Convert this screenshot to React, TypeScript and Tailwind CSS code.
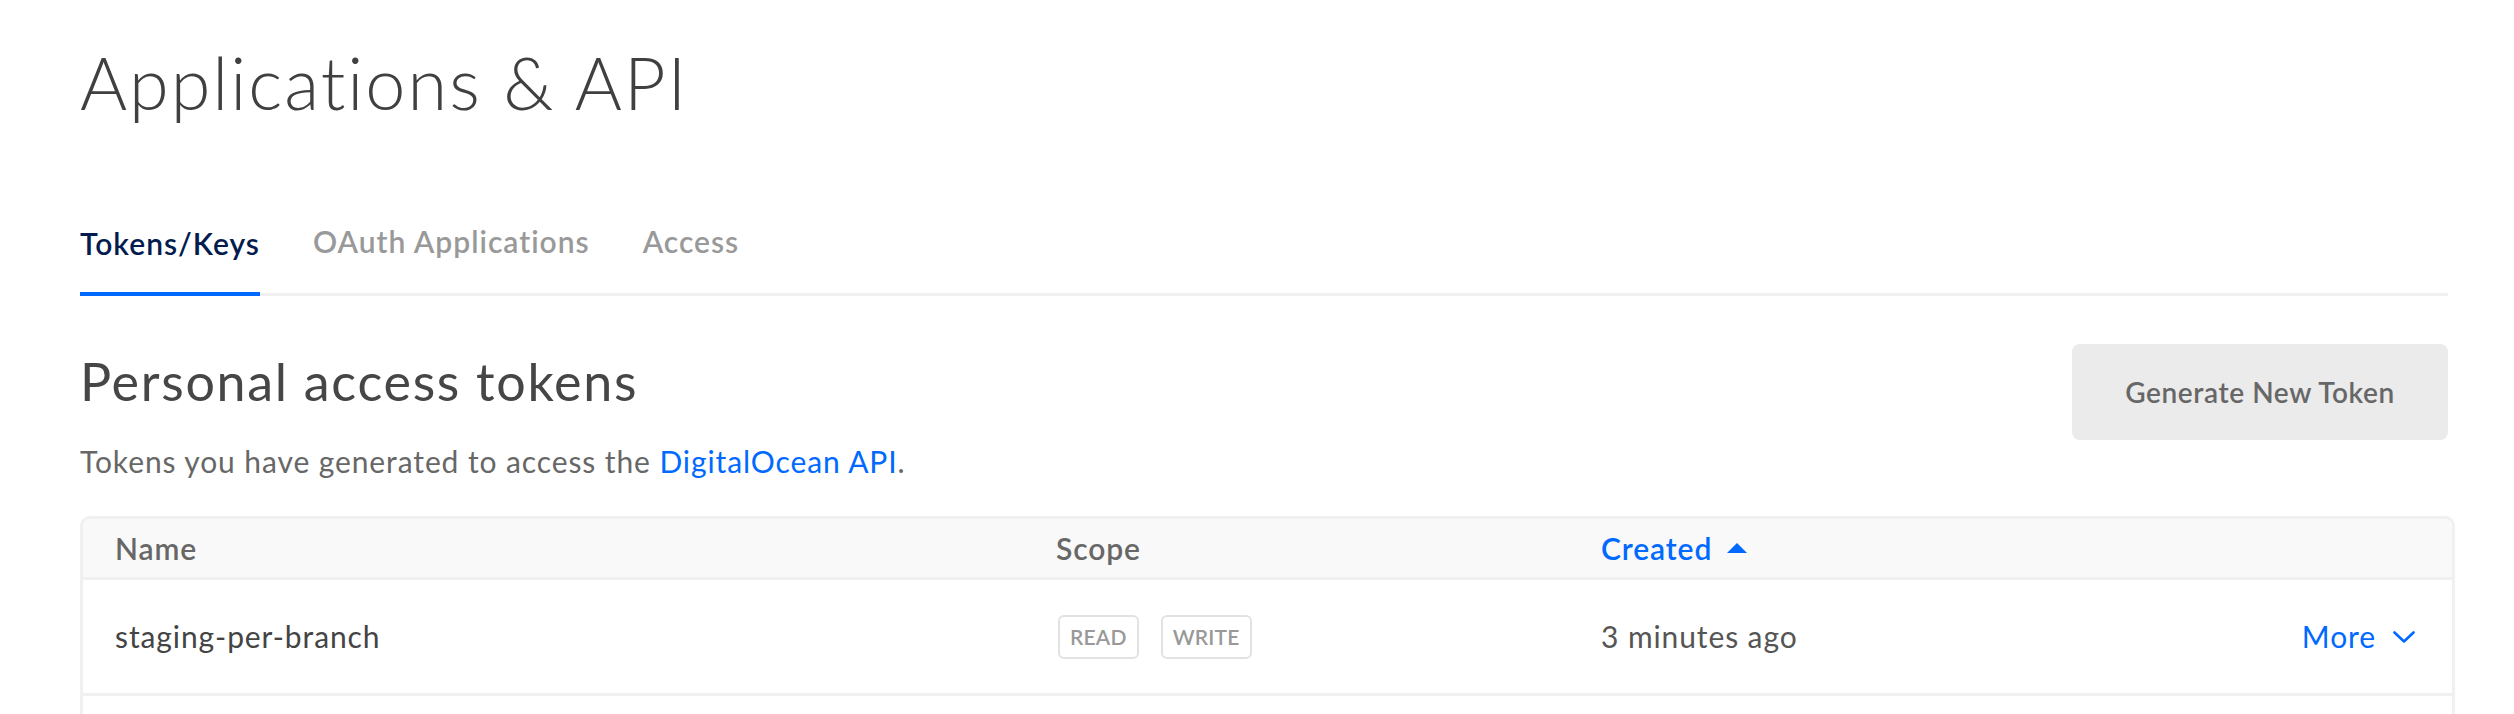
import React from 'react';

const tabs = ['Tokens/Keys', 'OAuth Applications', 'Access'];

const Badge: React.FC<{ label: string }> = ({ label }) => (
  <span className="inline-flex h-[44px] items-center rounded-[6px] border-2 border-[#e2e2e2] px-[10px] text-[21px] font-semibold tracking-[0.2px] text-[#999]">
    {label}
  </span>
);

export default function App() {
  return (
    <div className="min-h-[714px] bg-white font-['Lato',sans-serif] text-[#444]">
      <div className="pl-[80px] pr-[66px] pt-[46px]">
        <h1 className="text-[72px] leading-[72px] font-light tracking-[2px] text-[#404040]">Applications &amp; API</h1>

        {/* tabs */}
        <div className="mt-[109px] flex items-end gap-[53px] border-b-[3px] border-[#f0f0f0]">
          {tabs.map((t, i) => (
            <div
              key={t}
              className={
                i === 0
                  ? '-mb-[3px] border-b-4 border-[#0069ff] pb-[35px] text-[30px] leading-[28px] font-semibold tracking-[1px] text-[#031b4e]'
                  : 'pb-[38px] text-[30px] leading-[28px] font-semibold tracking-[1px] text-[#999]'
              }
            >
              {t}
            </div>
          ))}
        </div>

        <div className="mt-[48px] flex items-start justify-between">
          <div>
            <h2 className="mt-[12px] text-[52px] leading-[50px] font-normal tracking-[1.7px] text-[#464646]">Personal access tokens</h2>
            <p className="mt-[41px] text-[30px] leading-[28px] tracking-[0.9px] text-[#676767]">
              Tokens you have generated to access the <span className="text-[#0069ff]">DigitalOcean API</span>.
            </p>
          </div>
          <button className="flex h-[96px] w-[376px] items-center justify-center rounded-[8px] bg-[#ebebeb] text-[28px] font-semibold tracking-[0.6px] text-[#676767]">
            Generate New Token
          </button>
        </div>

        {/* table */}
        <div className="mt-[41px] -mr-[7px] overflow-hidden rounded-t-[10px] border-x-[3px] border-t-[3px] border-[#f0f0f0]">
          <div className="grid h-[61px] grid-cols-[941px_545px_1fr] items-center border-b-[3px] border-[#f0f0f0] bg-[#f9f9f9] pl-[32px] pr-[37px] text-[30px] font-semibold tracking-[0.9px] text-[#676767]">
            <span>Name</span>
            <span>Scope</span>
            <span className="flex items-center gap-[15px] text-[#0069ff]">
              Created
              <svg width="20" height="10" viewBox="0 0 20 10">
                <path d="M10 0 L20 10 L0 10 Z" fill="#0069ff" />
              </svg>
            </span>
          </div>
          <div className="grid h-[116px] grid-cols-[941px_545px_1fr] items-center border-b-[3px] border-[#f0f0f0] pl-[32px] pr-[37px] text-[30px] tracking-[0.9px] text-[#444]">
            <span>staging-per-branch</span>
            <span className="flex gap-[22px] pl-[2px] tracking-normal">
              <Badge label="READ" />
              <Badge label="WRITE" />
            </span>
            <span className="flex items-center justify-between">
              <span className="text-[#555]">3 minutes ago</span>
              <span className="flex items-center gap-[17px] text-[#0069ff]">
                More
                <svg width="22" height="12" viewBox="0 0 22 12" fill="none">
                  <path d="M1.5 1.5 L11 10.5 L20.5 1.5" stroke="#0069ff" strokeWidth="2.6" strokeLinecap="round" strokeLinejoin="round" />
                </svg>
              </span>
            </span>
          </div>
          <div className="h-[40px]" />
        </div>
      </div>
    </div>
  );
}
